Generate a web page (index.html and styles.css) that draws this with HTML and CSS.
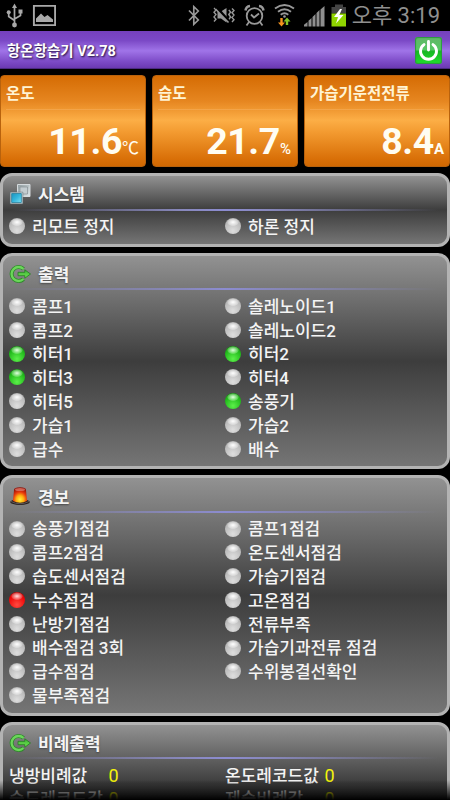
FILE: index.html
```html
<!DOCTYPE html>
<html lang="ko">
<head>
<meta charset="utf-8">
<title>항온항습기 V2.78</title>
<link rel="stylesheet" href="styles.css">
</head>
<body>
<svg class="defs" width="0" height="0" aria-hidden="true">
  <defs>
    <linearGradient id="green" x1="0" y1="0" x2="0" y2="1"><stop offset="0" stop-color="#3fae3a"/><stop offset="1" stop-color="#6fe84e"/></linearGradient>
    <linearGradient id="blue" x1="0" y1="0" x2="1" y2="1"><stop offset="0" stop-color="#1c93bd"/><stop offset=".5" stop-color="#35b6dc"/><stop offset="1" stop-color="#7be0f2"/></linearGradient>
    <linearGradient id="silver" x1="0" y1="0" x2="1" y2="1"><stop offset="0" stop-color="#8e9a9e"/><stop offset="1" stop-color="#dfe7ea"/></linearGradient>
    <radialGradient id="lamp" cx=".5" cy=".8" r=".75"><stop offset="0" stop-color="#fff23a"/><stop offset=".35" stop-color="#ffb010"/><stop offset=".65" stop-color="#e8380c"/><stop offset="1" stop-color="#8e1208"/></radialGradient>
    <symbol id="out" viewBox="0 0 22 18">
      <path d="M14.500 4A7 7 0 1 0 14.500 14" fill="none" stroke="#2c8a28" stroke-width="4"/>
      <path d="M14.500 4A7 7 0 1 0 14.500 14" fill="none" stroke="#6bd65a" stroke-width="2.300"/>
      <path d="M9 7.300H15.800V4.800L21.500 9L15.800 13.200V10.700H9Z" fill="url(#green)" stroke="#257c22" stroke-width=".8"/>
    </symbol>
  </defs>
</svg>

<header class="status">
  <svg class="status-left" width="56" height="31" viewBox="0 0 56 31">
    <g stroke="#a9a9a9" stroke-width="1.700" fill="none"><path d="M14.500 6V25M8.700 13V16.500L14.500 20.500M20.500 12V15.500L14.500 19"/></g>
    <g fill="#a9a9a9"><path d="M14.500 3.500L17 8H12Z"/><circle cx="14.500" cy="25" r="2.400"/><circle cx="8.700" cy="12.200" r="2"/><path d="M18.500 9.500h4v4h-4z"/></g>
    <path d="M33.900 5.900H55.100V25.100H33.900Z" fill="none" stroke="#a9a9a9" stroke-width="1.900"/>
    <path d="M36 22V18.500L41 13.500L44.500 17L47.500 15L53 19.500V22Z" fill="#a9a9a9"/>
  </svg>
  <svg class="status-right" width="162" height="31" viewBox="0 0 162 31">
    <path d="M1 10.500L10.300 20L5.800 24.300V6.700L10.300 11L1 20.500" fill="none" stroke="#999" stroke-width="1.700"/>
    <g fill="none" stroke="#999" stroke-width="1.400"><path d="M26 8l2 2-2 2.300 2 2.300-2 2.300 2 2.300-2 2.300M44 8.500l2 2-2 2.300 2 2.300-2 2.300 2 2.300-2 2.300M40.800 10l1.800 2-1.800 2.500 1.800 2.500-1.800 2.500"/></g>
    <path d="M29.500 11.500H33L38.500 8V22.500L33 18.500H29.500Z" fill="#999"/><path d="M28.500 7.500L42 22.500" stroke="#000" stroke-width="3"/><path d="M27.500 9L40.500 22.500" stroke="#999" stroke-width="1.600"/>
    <g fill="none" stroke="#999" stroke-width="1.800"><circle cx="66.500" cy="16" r="7.800"/><path d="M63 14.500L66 17.500L71 13.500M61 22L58.500 25.500M72 22L74.500 25.500"/><path d="M57.500 10.500Q58 6.500 62 6M75.500 10.500Q75 6.500 71 6" stroke-width="2.500"/></g>
    <g fill="none" stroke="#999" stroke-width="1.900"><path d="M87 8.500Q96.500 1.500 106 8.500M90 11.700Q96.500 6.700 103 11.700M92.700 14.700Q96.500 11.700 100.300 14.700"/></g><circle cx="96.500" cy="16.500" r="1.300" fill="#999"/>
    <path d="M93.500 26.500L90 22.500H92.300V18H94.700V22.500H97Z" fill="#f7941e"/><path d="M99 17.500L102.500 21.500H100.200V25H97.800V21.500H95.500Z" fill="#85c226"/>
    <g fill="#8f8f8f"><path d="M116 26.500V24.800L119.500 22V26.500ZM120.500 26.500V20.800L123.500 18V26.500ZM124.500 26.500V17L127.500 14V26.500ZM128.500 26.500V13L131.500 10V26.500ZM132.500 26.500V9.500L136.500 6V26.500Z"/></g>
    <path d="M147 4.500h8V7h3v6.500h-14.500V7H147Z" fill="#444"/><path d="M143.500 13.500H158V26.500H143.500Z" fill="#8fd400"/><path d="M152 9L146 17H150L148 23.500L155.500 15H151.300L154 9Z" fill="#fff"/>
  </svg>
  <span class="clock">오후 3:19</span>
</header>

<div class="titlebar">
  <h1>항온항습기 V2.78</h1>
  <span class="power"><svg width="27" height="27" viewBox="0 0 27 27"><path d="M9 7.600A8 8 0 1 0 18 7.600M13.500 4.500V13" fill="none" stroke="#fff" stroke-width="2.900" stroke-linecap="round"/></svg></span>
</div>

<section class="gauges">
  <div class="gauge"><h2>온도</h2><p class="value">11.6<span class="unit celsius">℃</span></p></div>
  <div class="gauge"><h2>습도</h2><p class="value">21.7<span class="unit">%</span></p></div>
  <div class="gauge"><h2>가습기운전전류</h2><p class="value">8.4<span class="unit amp">A</span></p></div>
</section>

<main class="panels">
  <section class="panel">
    <h2 class="head"><svg width="22" height="22" viewBox="0 0 22 22"><path d="M8.500 1.500H21V13.500H8.500Z" fill="url(#silver)" stroke="#d5dadd"/><path d="M11 4H18.500V11H11Z" fill="#c3ccd0" stroke="#7d878b" stroke-width=".6"/><path d="M1.200 9.200H13.800V20.800H1.200Z" fill="#e1eef2" stroke="#58686e" stroke-width=".6"/><path d="M2.600 10.500H12.400V19.500H2.600Z" fill="url(#blue)" stroke="#17718f" stroke-width=".7"/></svg>시스템</h2>
    <ul class="rows"><li>리모트 정지</li><li>하론 정지</li></ul>
  </section>

  <section class="panel">
    <h2 class="head"><svg width="22" height="18"><use href="#out"/></svg>출력</h2>
    <ul class="rows">
      <li>콤프1</li><li>솔레노이드1</li>
      <li>콤프2</li><li>솔레노이드2</li>
      <li class="on">히터1</li><li class="on">히터2</li>
      <li class="on">히터3</li><li>히터4</li>
      <li>히터5</li><li class="on">송풍기</li>
      <li>가습1</li><li>가습2</li>
      <li>급수</li><li>배수</li>
    </ul>
  </section>

  <section class="panel">
    <h2 class="head"><svg width="22" height="20" viewBox="0 0 22 20"><ellipse cx="11" cy="16" rx="9.800" ry="3" fill="#24201f"/><path d="M2 15.500Q11 20 20 15.500" fill="none" stroke="#766" stroke-width=".8"/><path d="M5 4Q5 1.200 11 1.200T17 4L18 15Q11 18.500 4 15Z" fill="url(#lamp)"/><ellipse cx="11" cy="3.500" rx="5" ry="1.500" fill="#df8275" opacity=".7"/></svg>경보</h2>
    <ul class="rows">
      <li>송풍기점검</li><li>콤프1점검</li>
      <li>콤프2점검</li><li>온도센서점검</li>
      <li>습도센서점검</li><li>가습기점검</li>
      <li class="alarm">누수점검</li><li>고온점검</li>
      <li>난방기점검</li><li>전류부족</li>
      <li>배수점검 3회</li><li>가습기과전류 점검</li>
      <li>급수점검</li><li>수위봉결선확인</li>
      <li>물부족점검</li>
    </ul>
  </section>

  <section class="panel last">
    <h2 class="head"><svg width="22" height="18"><use href="#out"/></svg>비례출력</h2>
    <dl class="readings">
      <div><dt>냉방비례값</dt><dd>0</dd></div><div><dt>온도레코드값</dt><dd>0</dd></div>
      <div><dt>습도레코드값</dt><dd>0</dd></div><div><dt>제습비례값</dt><dd>0</dd></div>
    </dl>
  </section>
</main>
<div class="fade"></div>
</body>
</html>
```

FILE: styles.css
```css
* { box-sizing: border-box; margin: 0; padding: 0; }

body {
  position: relative;
  width: 450px;
  height: 800px;
  overflow: hidden;
  background: #000;
  color: #f4f4f4;
  font-family: Roboto, "Noto Sans CJK KR", sans-serif;
}

.defs { position: absolute; }
svg { display: block; flex: none; }
ul { list-style: none; }

.status {
  display: flex;
  align-items: center;
  height: 31px;
  padding-right: 10px;
}
.status-right { margin-left: 132px; }
.clock {
  flex: 1;
  display: flex;
  justify-content: flex-end;
  font-size: 22px;
  line-height: 31px;
  color: #8f8f8f;
  white-space: nowrap;
  font-weight: 400;
}

.titlebar {
  display: flex;
  align-items: center;
  justify-content: space-between;
  height: 38px;
  padding: 0 8px 0 7px;
  background: linear-gradient(#7540bd, #7b49c6 25%, #a074e8 52%, #7d4bc7 80%, #6d3bb4 96%, #3c2168);
}
.titlebar h1 {
  padding-top: 3px;
  font-size: 14.5px;
  font-weight: 700;
  line-height: 20px;
  color: #fff;
  text-shadow: 1px 1px 2px #1c0b38;
}
.power {
  width: 27px;
  height: 27px;
  border-radius: 3px;
  background: linear-gradient(#62b668, #55c763 46%, #17b723 54%, #20e02c);
  box-shadow: inset 0 0 1px 1px #2b9a3d;
}

.gauges {
  display: flex;
  gap: 6px;
  margin-top: 6px;
}
.gauge {
  flex: 1;
  height: 92px;
  padding: 0 7px;
  border: 1px solid #b8620d;
  border-radius: 4px;
  background: linear-gradient(#d56c04, #e68620 28%, #fcae46 49%, #f39b31 62%, #d97008 92%, #d16802);
  color: #fffdf2;
}
.gauge h2 {
  height: 34px;
  margin: 0 -2px;
  border-bottom: 1px solid #f3a448;
  font-size: 15.5px;
  font-weight: 700;
  line-height: 36px;
  color: #fff4d4;
}
.value {
  display: flex;
  justify-content: flex-end;
  align-items: baseline;
  margin-right: -1px;
  font-size: 37.5px;
  font-weight: 700;
  line-height: 62px;
  letter-spacing: -.4px;
}
.unit { font-size: 15px; font-weight: 500; letter-spacing: 0; }
.celsius { font-size: 17px; font-weight: 400; }
.amp { margin-right: -1px; font-weight: 700; }

.panels {
  display: flex;
  flex-direction: column;
  gap: 5.9px;
  margin-top: 6px;
}
.panel {
  padding-bottom: 5.5px;
  border: 3px solid #b3b3b3;
  border-radius: 12px;
  background: linear-gradient(#929292, #3d3d3d 50%, #757575);
}
.last { height: 122px; }
.head {
  position: relative;
  display: flex;
  align-items: center;
  gap: 7px;
  height: 38.6px;
  padding: 0 6px;
  font-size: 17px;
  font-weight: 700;
  line-height: 24px;
  text-shadow: 0 1px 2px #444;
}
.head svg { margin-top: -3px; }
.head::after {
  content: "";
  position: absolute;
  left: 9px;
  right: 9px;
  bottom: 4px;
  height: 2px;
  background: linear-gradient(90deg, transparent, #8888bc 40%, #8c8cd0 50%, #8888bc 60%, transparent);
}
.rows {
  display: grid;
  grid-template-columns: 216px 1fr;
  grid-auto-rows: 23.8px;
  padding-left: 6px;
}
.rows li {
  display: flex;
  align-items: center;
  gap: 7px;
  padding-top: 1.4px;
  font-size: 17px;
  font-weight: 500;
  line-height: 22.4px;
  white-space: nowrap;
}
.rows li::before {
  content: "";
  width: 16px;
  height: 16px;
  margin-top: -2px;
  border-radius: 50%;
  background:
    radial-gradient(ellipse 6px 4px at 50% 26%, #fff, rgba(255, 255, 255, .3) 85%, transparent),
    radial-gradient(circle at 50% 80%, #dedede, #bcbcbc 60%, #989898);
}
.rows .on::before {
  background:
    radial-gradient(ellipse 6px 4px at 50% 26%, #e2ffe0, rgba(200, 255, 190, .3) 85%, transparent),
    radial-gradient(circle at 50% 80%, #5cf04a, #21b91b 60%, #127010);
}
.rows .alarm::before {
  background:
    radial-gradient(ellipse 6px 4px at 50% 26%, #ffe0e0, rgba(255, 190, 190, .3) 85%, transparent),
    radial-gradient(circle at 50% 80%, #ff4a40, #ee0808 60%, #960000);
}

.readings {
  display: grid;
  grid-template-columns: 216px 1fr;
  grid-auto-rows: 22.8px;
  padding: 2px 0 0 6px;
  font-size: 17px;
  font-weight: 500;
  line-height: 22.8px;
}
.readings div { display: flex; }
.readings dt { width: 99.5px; white-space: nowrap; }
.readings dd { color: #f4f40c; font-size: 18px; font-weight: 400; }

.fade {
  position: absolute;
  left: 0;
  right: 0;
  bottom: 0;
  height: 20px;
  background: linear-gradient(transparent, rgba(0, 0, 0, .6) 60%, #000);
}
```
